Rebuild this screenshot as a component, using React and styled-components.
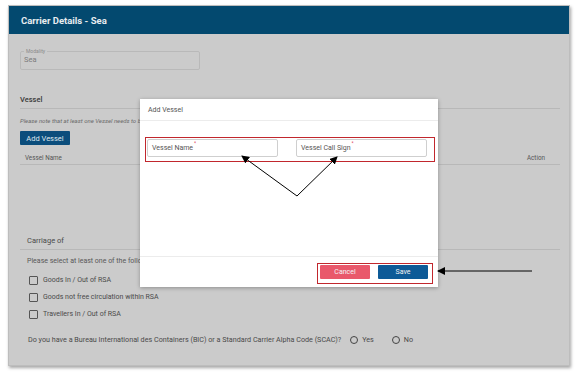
import React from "react";
import styled, { createGlobalStyle } from "styled-components";

const Global = createGlobalStyle`
  body {
    margin: 0;
    background: #ffffff;
    font-family: Roboto, "Liberation Sans", sans-serif;
  }
`;

export default function App() {
  return (
    <Page>
      <Global />
      <Panel>
        <Header>Carrier Details - Sea</Header>
        <Body>
          <Fieldset>
            <Legend>Modality</Legend>
            <FieldValue>Sea</FieldValue>
          </Fieldset>

          <SectionTitle>Vessel</SectionTitle>
          <Note>Please note that at least one Vessel needs to be added</Note>
          <PrimaryButton>Add Vessel</PrimaryButton>
          <TableHead>
            <span>Vessel Name</span>
            <span>Action</span>
          </TableHead>

          <Carriage>
            <SectionTitle indent>Carriage of</SectionTitle>
            <Hint>Please select at least one of the following</Hint>
            <CheckRow>
              <Box /> Goods In / Out of RSA
            </CheckRow>
            <CheckRow>
              <Box /> Goods not free circulation within RSA
            </CheckRow>
            <CheckRow>
              <Box /> Travellers In / Out of RSA
            </CheckRow>
            <Question>
              Do you have a Bureau International des Containers (BIC) or a
              Standard Carrier Alpha Code (SCAC)?
              <Radio>
                <Circle /> Yes
              </Radio>
              <Radio>
                <Circle /> No
              </Radio>
            </Question>
          </Carriage>
        </Body>
      </Panel>

      <Modal>
        <ModalTitle>Add Vessel</ModalTitle>
        <ModalBody>
          <Highlight>
            <Input>
              Vessel Name<Star>*</Star>
            </Input>
            <Input>
              Vessel Call Sign<Star>*</Star>
            </Input>
          </Highlight>
        </ModalBody>
        <ModalFooter>
          <ButtonGroup>
            <ActionButton color="#e9586b">Cancel</ActionButton>
            <ActionButton color="#0d5a97">Save</ActionButton>
          </ButtonGroup>
        </ModalFooter>
      </Modal>

      <Arrows width="579" height="372" viewBox="0 0 579 372">
        <defs>
          <marker
            id="head"
            markerWidth="8"
            markerHeight="8"
            refX="7"
            refY="4"
            orient="auto"
            markerUnits="userSpaceOnUse"
          >
            <path d="M0,0 L8,4 L0,8 Z" fill="#000" />
          </marker>
        </defs>
        <line x1="297" y1="196" x2="242" y2="156" stroke="#000" strokeWidth="1" markerEnd="url(#head)" />
        <line x1="297" y1="196" x2="337" y2="157" stroke="#000" strokeWidth="1" markerEnd="url(#head)" />
        <line x1="532" y1="271" x2="438" y2="271" stroke="#000" strokeWidth="1" markerEnd="url(#head)" />
      </Arrows>
    </Page>
  );
}

const Page = styled.div`
  position: relative;
  width: 579px;
  height: 372px;
  padding: 5px 0 0 8px;
  box-sizing: border-box;
`;

const Panel = styled.div`
  width: 562px;
  height: 361px;
  background: #cbcbcb;
  border: 1px solid #bdbdbd;
  box-shadow: 1px 2px 3px rgba(0, 0, 0, 0.35);
  box-sizing: border-box;
  display: flex;
  flex-direction: column;
`;

const Header = styled.div`
  height: 28px;
  background: #03496f;
  color: #e8ecef;
  font-size: 9.5px;
  font-weight: 700;
  display: flex;
  align-items: center;
  padding-left: 12px;
`;

const Body = styled.div`
  padding: 15px 9px 0 11px;
  display: flex;
  flex-direction: column;
`;

const Fieldset = styled.fieldset`
  width: 180px;
  height: 21px;
  margin: 0;
  padding: 0 0 0 3px;
  border: 1px solid #b9b9b9;
  border-radius: 2px;
  box-sizing: border-box;
`;

const Legend = styled.legend`
  font-size: 5px;
  color: #8a8a8a;
  padding: 0 2px;
  margin-left: 0;
  line-height: 5px;
`;

const FieldValue = styled.div`
  font-size: 7.5px;
  color: #7c7c7c;
  line-height: 9px;
  margin-top: 1px;
`;

const SectionTitle = styled.div`
  font-size: 7.5px;
  font-weight: ${(p) => (p.indent ? 400 : 500)};
  color: ${(p) => (p.indent ? "#4a4a4a" : "#3a3a3a")};
  padding: 0 0 4px ${(p) => (p.indent ? "7px" : "0")};
  border-bottom: 1px solid #b8b8b8;
  margin-top: ${(p) => (p.indent ? "0" : "25px")};
`;

const Note = styled.div`
  font-size: 6px;
  font-style: italic;
  color: #6a6a6a;
  margin-top: 8px;
`;

const PrimaryButton = styled.div`
  width: 50px;
  height: 14px;
  margin-top: 7px;
  background: #0b4d7c;
  color: #dfe7ee;
  font-size: 7.5px;
  display: flex;
  align-items: center;
  justify-content: center;
  border-radius: 1px;
`;

const TableHead = styled.div`
  display: flex;
  justify-content: space-between;
  font-size: 6.3px;
  color: #555;
  padding: 9px 15px 2px 5px;
  border-bottom: 1px solid #b8b8b8;
`;

const Carriage = styled.div`
  margin-top: 71px;
  display: flex;
  flex-direction: column;
`;

const Hint = styled.div`
  font-size: 7px;
  color: #585858;
  margin: 7px 0 2px 7px;
`;

const CheckRow = styled.div`
  display: flex;
  align-items: center;
  gap: 5px;
  font-size: 7px;
  color: #4a4a4a;
  margin: 9px 0 0 9px;
  height: 8px;
`;

const Box = styled.span`
  width: 7px;
  height: 7px;
  border: 1px solid #555;
  border-radius: 1px;
`;

const Question = styled.div`
  display: flex;
  align-items: center;
  font-size: 7.2px;
  color: #4a4a4a;
  margin: 17px 0 0 8px;
`;

const Radio = styled.span`
  display: inline-flex;
  align-items: center;
  gap: 4px;
  margin-left: 9px;
  & + & {
    margin-left: 18px;
  }
`;

const Circle = styled.span`
  width: 6px;
  height: 6px;
  border: 1.2px solid #444;
  border-radius: 50%;
`;

const Modal = styled.div`
  position: absolute;
  left: 140px;
  top: 99px;
  width: 298px;
  height: 188px;
  background: #ffffff;
  box-shadow: 0 1px 4px rgba(0, 0, 0, 0.3);
  display: flex;
  flex-direction: column;
`;

const ModalTitle = styled.div`
  height: 21px;
  display: flex;
  align-items: center;
  padding-left: 8px;
  font-size: 7px;
  color: #555;
  border-bottom: 1px solid #ececec;
`;

const ModalBody = styled.div`
  flex: 1;
  padding: 16px 3px 0 5px;
`;

const Highlight = styled.div`
  display: flex;
  justify-content: space-between;
  border: 1.5px solid #c1272d;
  padding: 1px 7px 3px 1px;
  height: 25px;
  box-sizing: border-box;
`;

const Input = styled.div`
  width: 131px;
  height: 18px;
  border: 1px solid #cfcfcf;
  border-radius: 2px;
  box-sizing: border-box;
  font-size: 7px;
  color: #555;
  display: flex;
  align-items: center;
  padding-left: 4px;
`;

const Star = styled.sup`
  color: #e0405a;
  font-size: 5px;
  margin-left: 1px;
  align-self: flex-start;
  margin-top: 1px;
  line-height: 5px;
`;

const ModalFooter = styled.div`
  height: 31px;
  border-top: 1px solid #ececec;
  display: flex;
  justify-content: flex-end;
  padding: 6px 5px 0 0;
  box-sizing: border-box;
`;

const ButtonGroup = styled.div`
  display: flex;
  gap: 8px;
  border: 1.5px solid #c1272d;
  padding: 1px 4px 5px 2px;
  height: 21px;
  box-sizing: border-box;
`;

const ActionButton = styled.div`
  width: 50px;
  height: 14px;
  background: ${(p) => p.color};
  color: #f3f3f3;
  font-size: 7px;
  display: flex;
  align-items: center;
  justify-content: center;
  border-radius: 1px;
`;

const Arrows = styled.svg`
  position: absolute;
  left: 0;
  top: 0;
  pointer-events: none;
`;
